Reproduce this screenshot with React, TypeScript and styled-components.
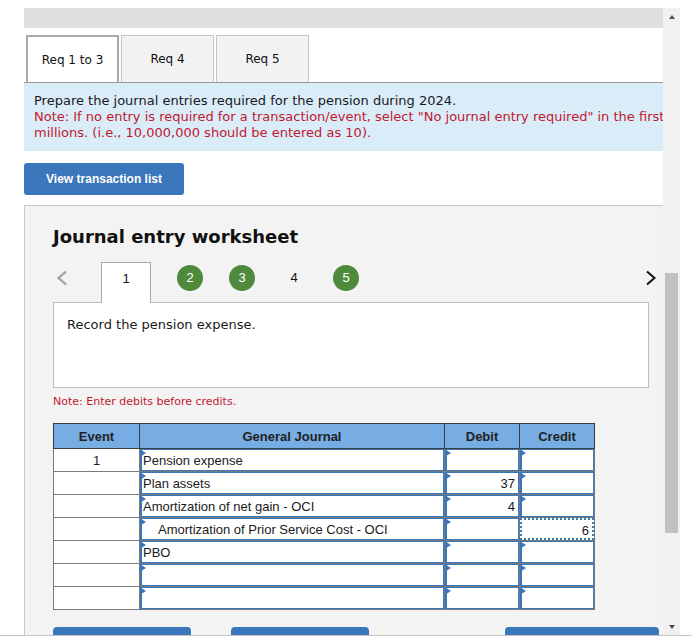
import React from 'react';
import styled, { createGlobalStyle } from 'styled-components';

const Global = createGlobalStyle`
  html, body { margin: 0; padding: 0; background: #fff; }
  body { width: 692px; height: 636px; overflow: hidden; }
  * { box-sizing: border-box; }
`;

const UI = `Verdana, "DejaVu Sans", sans-serif`;
const ARIAL = `Arial, "Liberation Sans", sans-serif`;
const RED = '#c0192f';
const BLUE = '#3a76ba';

const Page = styled.div`
  width: 692px;
  height: 636px;
  padding-top: 8px;
  border-bottom: 1px solid #c4c4c4;
  display: flex;
  align-items: flex-start;
`;

const Viewport = styled.div`
  margin-left: 24px;
  width: 639px;
  height: 627px;
  overflow: hidden;
`;

const TopBar = styled.div`
  height: 20px;
  background: #dfdfdf;
`;

const TabRow = styled.div`
  display: flex;
  gap: 2px;
  padding-left: 2px;
  margin-top: 7px;
  border-bottom: 1px solid #9a9a9a;
`;

const Tab = styled.div<{ $active?: boolean }>`
  width: 93px;
  height: 47px;
  display: flex;
  align-items: center;
  justify-content: center;
  font: 12px/16px ${UI};
  color: #111;
  background: ${(p) => (p.$active ? '#fff' : '#f2f2f2')};
  border: ${(p) => (p.$active ? '2px solid #a9a9a9' : '1px solid #c6c6c6')};
  border-bottom: none;
`;

const Instructions = styled.div`
  background: #dbecf9;
  padding: 10px 10px;
  font: 13px/16px ${UI};
  color: #1a1a1a;
  white-space: nowrap;
`;

const RedText = styled.span`
  color: ${RED};
`;

const PrimaryButton = styled.button`
  margin-top: 12px;
  width: 160px;
  height: 32px;
  border: none;
  border-radius: 3px;
  background: ${BLUE};
  color: #fff;
  font: bold 12px ${ARIAL};
  display: flex;
  align-items: center;
  justify-content: center;
  padding: 0;
`;

const Panel = styled.div`
  margin-top: 10px;
  width: 700px;
  height: 460px;
  background: #f3f3f3;
  border-top: 1px solid #c9c9c9;
  border-left: 1px solid #c9c9c9;
  padding: 20px 0 0 28px;
`;

const Title = styled.h2`
  margin: 0;
  font: bold 18px/22px ${UI};
  color: #111;
`;

const Nav = styled.div`
  margin-top: 14px;
  width: 604px;
  height: 41px;
  margin-bottom: -1px;
  display: flex;
  align-items: flex-start;
  position: relative;
  z-index: 1;
`;

const Arrow = styled.svg<{ $next?: boolean }>`
  margin-top: 8px;
  margin-left: ${(p) => (p.$next ? 'auto' : '3px')};
  flex-shrink: 0;
`;

const StepTab = styled.div`
  margin-left: 33px;
  width: 50px;
  height: 41px;
  background: #fff;
  border: 1px solid #a8a8a8;
  border-bottom: none;
  padding-top: 8px;
  text-align: center;
  font: 13px/16px ${ARIAL};
  color: #111;
`;

const Steps = styled.div`
  display: flex;
  gap: 26px;
  margin-left: 26px;
  margin-top: 3px;
`;

const Step = styled.div<{ $done?: boolean }>`
  width: 26px;
  height: 26px;
  border-radius: 50%;
  background: ${(p) => (p.$done ? '#4f8a3c' : 'transparent')};
  color: ${(p) => (p.$done ? '#fff' : '#111')};
  display: flex;
  align-items: center;
  justify-content: center;
  font: 13px/16px ${ARIAL};
`;

const Description = styled.div`
  width: 596px;
  height: 86px;
  background: #fff;
  border: 1px solid #bcbcbc;
  padding: 14px 13px;
  font: 13px/16px ${UI};
  color: #1a1a1a;
`;

const Note = styled.div`
  margin-top: 6px;
  font: 11px/16px ${UI};
  color: ${RED};
`;

const Table = styled.table`
  margin-top: 13px;
  width: 541px;
  border-collapse: collapse;
  table-layout: fixed;
  font: 13px ${ARIAL};
  color: #1a1a1a;
`;

const Th = styled.th<{ $w: number }>`
  width: ${(p) => p.$w}px;
  height: 25px;
  padding: 0;
  background: #78ade3;
  border: 1px solid #3d3d3d;
  font: bold 13px ${ARIAL};
  color: #222;
  text-align: center;
`;

const EventCell = styled.td`
  height: 22px;
  padding: 0;
  border: 1px solid #7a7a7a;
  background: #fff;
  text-align: center;
`;

const InputCell = styled.td`
  height: 22px;
  padding: 0;
  border: 1px solid #7a7a7a;
`;

const Field = styled.div<{ $align?: 'left' | 'right'; $indent?: boolean; $focus?: boolean }>`
  position: relative;
  height: 22px;
  background: #fff;
  border: ${(p) => (p.$focus ? `2px dotted ${BLUE}` : `1px solid ${BLUE}`)};
  border-left-width: 2px;
  line-height: 21px;
  white-space: nowrap;
  overflow: hidden;
  text-align: ${(p) => p.$align || 'left'};
  padding: ${(p) => (p.$align === 'right' ? '0 3px 0 0' : p.$indent ? '0 0 0 16px' : '0 0 0 1px')};
  &::before {
    content: ${(p) => (p.$focus ? 'none' : "''")};
    position: absolute;
    top: 0;
    left: -1px;
    border-left: 5px solid #3a75c4;
    border-top: 3px solid transparent;
    border-bottom: 3px solid transparent;
  }
`;

const BottomBar = styled.div`
  margin-top: 17px;
  display: flex;
`;

const BottomButton = styled.div<{ $w: number; $ml: number }>`
  width: ${(p) => p.$w}px;
  margin-left: ${(p) => p.$ml}px;
  height: 24px;
  background: ${BLUE};
  border-radius: 4px 4px 0 0;
`;

const Scrollbar = styled.div`
  width: 17px;
  height: 627px;
  background: #f1f1f1;
  display: flex;
  flex-direction: column;
`;

const ScrollBtn = styled.div`
  height: 17px;
  display: flex;
  align-items: center;
  justify-content: center;
`;

const UpTri = styled.div`
  width: 0;
  height: 0;
  border-left: 3.5px solid transparent;
  border-right: 3.5px solid transparent;
  border-bottom: 4px solid #505050;
`;

const DownTri = styled.div`
  width: 0;
  height: 0;
  border-left: 3.5px solid transparent;
  border-right: 3.5px solid transparent;
  border-top: 4px solid #505050;
`;

const Track = styled.div`
  flex: 1;
`;

const Thumb = styled.div`
  margin: 248px 2px 0;
  height: 260px;
  background: #c1c1c1;
`;

type Row = {
  event?: string;
  account: string;
  indent?: boolean;
  debit?: string;
  credit?: string;
  focusCredit?: boolean;
};

const rows: Row[] = [
  { event: '1', account: 'Pension expense' },
  { account: 'Plan assets', debit: '37' },
  { account: 'Amortization of net gain - OCI', debit: '4' },
  { account: 'Amortization of Prior Service Cost - OCI', indent: true, credit: '6', focusCredit: true },
  { account: 'PBO' },
  { account: '' },
  { account: '' },
];

export default function App() {
  return (
    <>
      <Global />
      <Page>
        <Viewport>
          <TopBar />
          <TabRow>
            <Tab $active>Req 1 to 3</Tab>
            <Tab>Req 4</Tab>
            <Tab>Req 5</Tab>
          </TabRow>
          <Instructions>
            Prepare the journal entries required for the pension during 2024.
            <br />
            <RedText>
              Note: If no entry is required for a transaction/event, select "No journal entry required" in the first account field. Enter your answers in
              <br />
              millions. (i.e., 10,000,000 should be entered as 10).
            </RedText>
          </Instructions>
          <PrimaryButton>View transaction list</PrimaryButton>
          <Panel>
            <Title>Journal entry worksheet</Title>
            <Nav>
              <Arrow width="12" height="16" viewBox="0 0 12 16">
                <polyline points="10,1.5 2.5,8 10,14.5" fill="none" stroke="#a0a0a0" strokeWidth="2.2" />
              </Arrow>
              <StepTab>1</StepTab>
              <Steps>
                <Step $done>2</Step>
                <Step $done>3</Step>
                <Step>4</Step>
                <Step $done>5</Step>
              </Steps>
              <Arrow $next width="12" height="16" viewBox="0 0 12 16">
                <polyline points="2,1.5 9.5,8 2,14.5" fill="none" stroke="#111" strokeWidth="2" />
              </Arrow>
            </Nav>
            <Description>Record the pension expense.</Description>
            <Note>Note: Enter debits before credits.</Note>
            <Table>
              <thead>
                <tr>
                  <Th $w={86}>Event</Th>
                  <Th $w={305}>General Journal</Th>
                  <Th $w={75}>Debit</Th>
                  <Th $w={75}>Credit</Th>
                </tr>
              </thead>
              <tbody>
                {rows.map((r, i) => (
                  <tr key={i}>
                    <EventCell>{r.event}</EventCell>
                    <InputCell>
                      <Field $indent={r.indent}>{r.account}</Field>
                    </InputCell>
                    <InputCell>
                      <Field $align="right">{r.debit}</Field>
                    </InputCell>
                    <InputCell>
                      <Field $align="right" $focus={r.focusCredit}>{r.credit}</Field>
                    </InputCell>
                  </tr>
                ))}
              </tbody>
            </Table>
            <BottomBar>
              <BottomButton $w={138} $ml={0} />
              <BottomButton $w={138} $ml={40} />
              <BottomButton $w={154} $ml={136} />
            </BottomBar>
          </Panel>
        </Viewport>
        <Scrollbar>
          <ScrollBtn>
            <UpTri />
          </ScrollBtn>
          <Track>
            <Thumb />
          </Track>
          <ScrollBtn>
            <DownTri />
          </ScrollBtn>
        </Scrollbar>
      </Page>
    </>
  );
}
